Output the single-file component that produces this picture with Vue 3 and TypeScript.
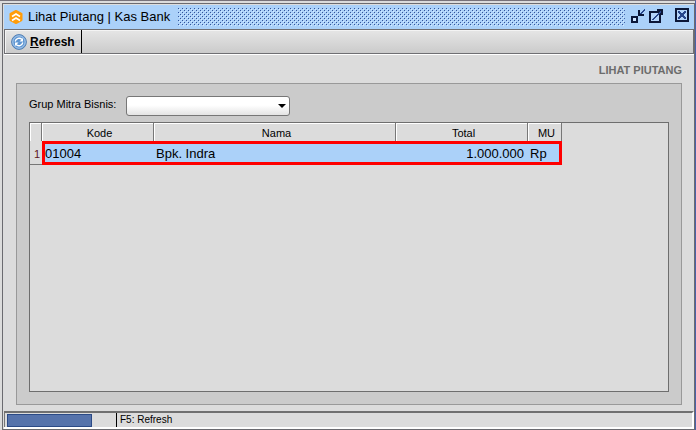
<script setup lang="ts">
import { ref } from 'vue'

interface Receivable {
  kode: string
  nama: string
  total: string
  mu: string
}

const group = ref('')
const progress = 78
const rows: Receivable[] = [
  { kode: '01004', nama: 'Bpk. Indra', total: '1.000.000', mu: 'Rp' },
]
</script>

<template>
  <div class="desktop">
    <main class="window">
      <header class="titlebar">
        <svg class="logo" width="14" height="16" viewBox="0 0 14 16" aria-hidden="true">
          <path d="M7 2 12.500 5v6L7 14 1.500 11V5z" fill="#ff9d0a" stroke="#ff9d0a" stroke-width="2" stroke-linejoin="round" />
          <path d="M3 7.500 7 5l4 2.500M3 11.500 7 9l4 2.500" fill="none" stroke="#fff" stroke-width="1.600" />
        </svg>
        <h1>Lihat Piutang | Kas Bank</h1>
        <svg class="grip" aria-hidden="true">
          <defs>
            <pattern id="dots" width="4" height="4" patternUnits="userSpaceOnUse">
              <path d="M0 0h1v1H0zM2 2h1v1H2z" fill="#34549b" />
              <path d="M1 1h1v1H1zM3 3h1v1H3z" fill="#d5eaff" />
            </pattern>
          </defs>
          <rect width="100%" height="100%" fill="url(#dots)" />
        </svg>
        <div class="controls">
          <button type="button" aria-label="Minimize">
            <svg width="15" height="15" viewBox="0 0 15 15" shape-rendering="crispEdges">
              <path d="M1 9h5v5H1z" fill="#cfe5ff" stroke="#0b1738" stroke-width="2" />
              <path d="M7 2h2v4h4v2H7z" fill="#0b1738" />
              <path d="M9 5h1V4h1V3h1V2h1V1h1v2h-1v1h-1v1h-1v1H9z" fill="#28478d" />
            </svg>
          </button>
          <button type="button" aria-label="Maximize">
            <svg width="15" height="15" viewBox="0 0 15 15" shape-rendering="crispEdges">
              <path d="M1 4h10v10H1z" fill="#b3d4fa" stroke="#0b1738" stroke-width="2" />
              <path d="M3 11h1v-1h1V9h1V8h1V7h1V6h1V5h1V4h1V3h1V2h1v2h-1v1h-1v1h-1v1H9v1H8v1H7v1H6v1H5v1H3z" fill="#28478d" />
              <path d="M8 1h6v6h-2V3H8z" fill="#0b1738" />
            </svg>
          </button>
          <button type="button" class="close" aria-label="Close">
            <svg width="15" height="15" viewBox="0 0 15 15" shape-rendering="crispEdges">
              <path d="M1 1h12v12H1z" fill="#b3d4fa" stroke="#0b1738" stroke-width="2" />
              <path d="M3 3h2v1h1v1h2V4h1V3h2v2h-1v1H9v2h1v1h1v2H9v-1H8V9H6v1H5v1H3V9h1V8h1V6H4V5H3z" fill="#28478d" />
            </svg>
          </button>
        </div>
      </header>

      <div class="toolbar">
        <button type="button" class="refresh">
          <svg width="16" height="16" viewBox="0 0 16 16" aria-hidden="true">
            <circle cx="8" cy="8" r="7.400" fill="#5f96d2" stroke="#5580b3" />
            <circle cx="8" cy="8" r="6.200" fill="none" stroke="#c3dcf5" stroke-width=".8" />
            <path d="M4.200 7.500a4 4 0 0 1 6.800-2M11.800 8.500a4 4 0 0 1-6.800 2" fill="none" stroke="#fff" stroke-width="1.300" />
            <path d="M12 4v3.500H8.500zM4 12V8.500h3.500z" fill="#fff" />
          </svg>
          <span><u>R</u>efresh</span>
        </button>
      </div>

      <section class="content">
        <h2>LIHAT PIUTANG</h2>
        <div class="panel">
          <div class="filter">
            <label for="grup">Grup Mitra Bisnis:</label>
            <div class="combo">
              <select id="grup" v-model="group">
                <option value=""></option>
              </select>
              <svg width="8" height="4" viewBox="0 0 8 4" aria-hidden="true">
                <path d="M0 0h8L4 4z" />
              </svg>
            </div>
          </div>
          <div class="grid">
            <table>
              <colgroup>
                <col class="c-no" />
                <col class="c-kode" />
                <col class="c-nama" />
                <col class="c-total" />
                <col class="c-mu" />
              </colgroup>
              <thead>
                <tr>
                  <th></th>
                  <th scope="col">Kode</th>
                  <th scope="col">Nama</th>
                  <th scope="col">Total</th>
                  <th scope="col">MU</th>
                </tr>
              </thead>
              <tbody>
                <tr v-for="(row, i) in rows" :key="row.kode">
                  <th scope="row">{{ i + 1 }}</th>
                  <td>{{ row.kode }}</td>
                  <td>{{ row.nama }}</td>
                  <td class="num">{{ row.total }}</td>
                  <td>{{ row.mu }}</td>
                </tr>
              </tbody>
            </table>
          </div>
        </div>
      </section>

      <footer class="status">
        <div class="track"><div class="bar" :style="{ width: progress + '%' }"></div></div>
        <span class="hint">F5: Refresh</span>
      </footer>
    </main>
  </div>
</template>

<style>
body {
  margin: 0;
}
</style>

<style scoped>
* {
  box-sizing: border-box;
}
.desktop {
  display: flex;
  min-height: 100vh;
  padding: 2px 0 0 2px;
  border-top: 1px solid #77727a;
  border-right: 1px solid #4a62a8;
  background: #dcdcdc;
  font-family: "Liberation Sans", Arial, sans-serif;
  font-size: 11px;
  color: #000;
}
.window {
  flex: 1;
  display: flex;
  flex-direction: column;
  min-width: 0;
  padding: 1px 0 0 1px;
  border: 1px solid #6b6b70;
  background: #dcdcdc;
}
button {
  padding: 0;
  border: 0;
  background: none;
  font: inherit;
  color: inherit;
}
svg {
  display: block;
}
.titlebar {
  display: flex;
  align-items: center;
  height: 24px;
  padding: 0 4px 0 5px;
  background: #abd1f9;
}
h1 {
  margin: 0 8px 0 5px;
  font-size: 13px;
  font-weight: normal;
  line-height: 24px;
  white-space: nowrap;
}
.grip {
  flex: 1;
  min-width: 0;
  height: 18px;
}
.controls {
  display: flex;
  gap: 3px;
  margin-left: 6px;
  padding-bottom: 3px;
}
.close {
  margin-left: 8px;
}
.toolbar {
  display: flex;
  height: 25px;
  border: 1px solid #6f6f73;
  box-shadow: inset 1px 1px #f4f4f4;
  background: linear-gradient(#e6e6e6, #cbcbcb);
}
.refresh {
  display: flex;
  align-items: center;
  gap: 3px;
  padding: 1px 6px 0;
  border-right: 1px solid #000;
  font-size: 12px;
  font-weight: bold;
}
.content {
  flex: 1;
  display: flex;
  flex-direction: column;
  padding: 8px 12px 6px 12px;
  border-top: 1px solid #fff;
}
h2 {
  margin: 0;
  font-size: 11px;
  line-height: 14px;
  color: #6c6c6c;
  text-align: right;
}
.panel {
  flex: 1;
  display: flex;
  flex-direction: column;
  gap: 6px;
  margin-top: 6px;
  padding: 12px;
  border: 1px solid #999;
  background: #cbcbcb;
}
.filter {
  display: flex;
  align-items: center;
  gap: 10px;
}
label {
  line-height: 16px;
  padding-bottom: 4px;
}
.combo {
  position: relative;
  width: 164px;
}
select {
  display: block;
  width: 100%;
  height: 20px;
  border: 1px solid #777;
  border-radius: 3px;
  appearance: none;
  background: linear-gradient(#fff 45%, #e4e4e4);
  font: inherit;
}
.combo svg {
  position: absolute;
  right: 4px;
  top: 8px;
  pointer-events: none;
}
.grid {
  flex: 1;
  border: 1px solid #6e6e6e;
  background: #dcdcdc;
}
table {
  width: 532px;
  table-layout: fixed;
  border-collapse: separate;
  border-spacing: 0;
}
.c-no { width: 12px; }
.c-kode { width: 112px; }
.c-nama { width: 242px; }
.c-total { width: 132px; }
.c-mu { width: 34px; }
th {
  padding: 0;
  font-weight: normal;
}
thead th {
  height: 18px;
  padding: 2px 0 0 4px;
  border-right: 1px solid #777;
  box-shadow: inset 1px 1px #fff;
  line-height: 16px;
}
tbody th {
  border-bottom: 1px solid #777;
  text-align: right;
  padding: 2px 2px 0 0;
  color: #5c1420;
}
td {
  height: 24px;
  padding: 2px 2px 0;
  border-top: 3px solid #f00;
  border-bottom: 3px solid #f00;
  background: #abd1f9;
  font-size: 13px;
  line-height: 16px;
  white-space: nowrap;
}
td:nth-child(2) {
  padding-left: 0;
  border-left: 3px solid #f00;
}
td:last-child {
  border-right: 3px solid #f00;
}
.num {
  padding-right: 4px;
  text-align: right;
}
.status {
  display: flex;
  height: 18px;
  border-top: 2px solid #707070;
  border-right: 2px solid #fff;
  border-bottom: 2px solid #fff;
}
.track {
  width: 113px;
  padding: 1px 0 0 2px;
  border-left: 1px solid #777;
  border-right: 1px solid #000;
}
.bar {
  height: 13px;
  border: 1px solid #2b4a86;
  background: #5673ab;
}
.hint {
  padding: 0 3px;
  font-size: 10px;
  line-height: 14px;
}
</style>
